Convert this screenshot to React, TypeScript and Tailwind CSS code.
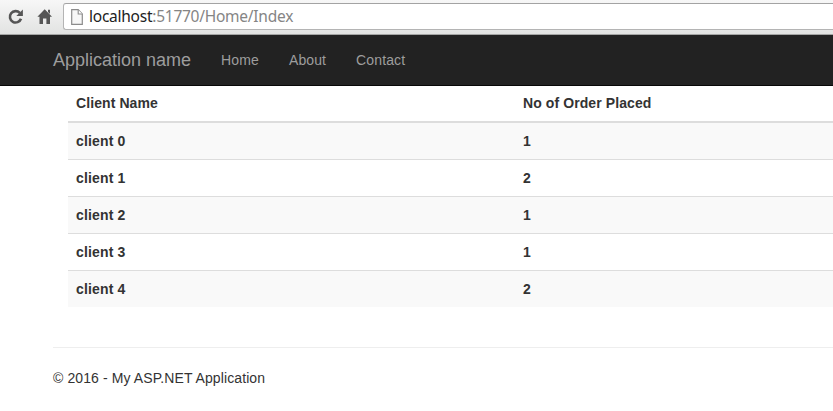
const rows = [
  { name: 'client 0', orders: 1 },
  { name: 'client 1', orders: 2 },
  { name: 'client 2', orders: 1 },
  { name: 'client 3', orders: 1 },
  { name: 'client 4', orders: 2 },
];

function BrowserBar() {
  return (
    <header className="flex h-[35px] border-b border-[#a4a5a4] bg-linear-to-b from-[#f7f7f7] to-[#e2e3e2]">
      <svg width="60" height="34" viewBox="0 0 60 34" className="shrink-0">
        <path d="M19.8 12.9A5.7 5.7 0 1 0 21 18.7" fill="none" stroke="#555" strokeWidth="2.6" />
        <path d="M22.9 9.6V16H16.3Z" fill="#555" />
        <path d="M44.7 9.2 52 16.7H50V24H46.4V18.6H43V24H39.5V16.7H37.4Z" fill="#555" />
        <path d="M48 9.7H50V14L48 12Z" fill="#555" />
      </svg>
      <div className="mt-[3px] ml-[3px] flex h-[27px] flex-1 items-center rounded-l-[3px] border border-r-0 border-[#b4b4b4] border-t-[#a3a3a3] bg-white">
        <svg width="12" height="16" viewBox="0 0 12 16" className="ml-[7px] shrink-0">
          <path d="M.7.7H7.2L11.3 5V15.3H.7Z" fill="#f7f7f7" stroke="#8c8c8c" strokeWidth="1.2" />
          <path d="M7.2.7V5H11.3" fill="#fff" stroke="#8c8c8c" strokeWidth="1.1" />
        </svg>
        <div className="mb-px ml-1.5 font-['Noto_Sans',sans-serif] text-[15.5px] leading-[20px] tracking-[-0.25px] whitespace-nowrap text-[#858585]">
          <span className="text-[#222]">localhost</span>:51770/Home/Index
        </div>
      </div>
    </header>
  );
}

export default function App() {
  return (
    <div className="h-[411px] w-full overflow-hidden bg-white font-['Liberation_Sans',Arial,sans-serif] text-[14px] leading-[20px] text-[#333]">
      <BrowserBar />
      <nav className="flex h-[51px] items-center border-b border-[#080808] bg-[#222] pl-[53px] text-[#9d9d9d]">
        <a className="text-[18px]">Application name</a>
        <a className="ml-[30px] tracking-[0.12px]">Home</a>
        <a className="ml-[30px] tracking-[0.12px]">About</a>
        <a className="ml-[30px] tracking-[0.12px]">Contact</a>
      </nav>
      <main className="pl-[68px] font-bold tracking-[0.09px]">
        <div className="flex h-[37px] border-b-2 border-[#ddd] pt-[7px] pl-2">
          <div className="w-[447px]">Client Name</div>
          <div>No of Order Placed</div>
        </div>
        <div>
          {rows.map((row) => (
            <div
              key={row.name}
              className="flex h-[37px] border-b border-[#ddd] pt-2 pl-2 odd:bg-[#f9f9f9] last:h-9 last:border-b-0"
            >
              <div className="w-[447px] tracking-[0.15px]">{row.name}</div>
              <div>{row.orders}</div>
            </div>
          ))}
        </div>
      </main>
      <footer className="mt-10 ml-[53px] border-t border-[#eee] pt-5 tracking-[0.1px]">© 2016 - My ASP.NET Application</footer>
    </div>
  );
}
